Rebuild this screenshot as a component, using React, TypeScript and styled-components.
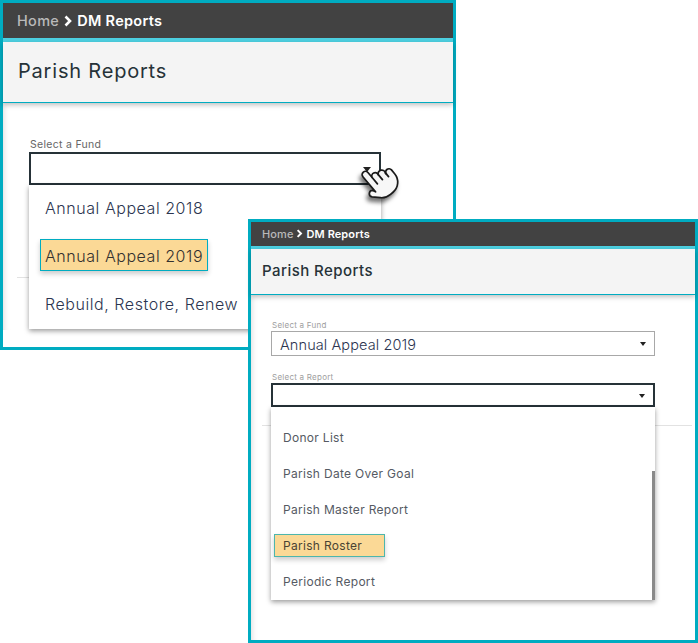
import React from "react";
import styled, { createGlobalStyle } from "styled-components";

const GlobalStyle = createGlobalStyle`
  html, body {
    margin: 0;
    background: #fff;
    font-family: Inter, "Open Sans", "Liberation Sans", sans-serif;
  }
`;

const Stage = styled.div`
  position: relative;
  width: 698px;
  height: 643px;
  overflow: hidden;
  background: #fff;
`;

const Window = styled.section<{ $small?: boolean }>`
  position: absolute;
  z-index: ${(p) => (p.$small ? 4 : 1)};
  box-sizing: border-box;
  left: ${(p) => (p.$small ? "248px" : "0")};
  top: ${(p) => (p.$small ? "219px" : "0")};
  width: ${(p) => (p.$small ? "450px" : "456px")};
  height: ${(p) => (p.$small ? "424px" : "350px")};
  border: 3px solid #00acc1;
  background: #fff;
  display: flex;
  flex-direction: column;
`;

const Breadcrumb = styled.div<{ $small?: boolean }>`
  flex: none;
  box-sizing: border-box;
  height: ${(p) => (p.$small ? "27px" : "39px")};
  padding: 0 0 ${(p) => (p.$small ? "1px" : "0")} ${(p) => (p.$small ? "11px" : "14px")};
  display: flex;
  align-items: center;
  gap: ${(p) => (p.$small ? "2px" : "3px")};
  background: #424242;
  border-bottom: ${(p) => (p.$small ? "3px" : "4px")} solid #4dd0e1;
  font-size: ${(p) => (p.$small ? "11px" : "14.5px")};
  letter-spacing: ${(p) => (p.$small ? "0.1px" : "0.3px")};
  font-weight: 600;
  color: #fff;
`;

const Crumb = styled.span`
  font-weight: 500;
  color: #b9b9b9;
`;

const TitleBar = styled.header<{ $small?: boolean }>`
  flex: none;
  box-sizing: border-box;
  height: ${(p) => (p.$small ? "46px" : "61px")};
  padding: 0 0 2px ${(p) => (p.$small ? "11px" : "15px")};
  display: flex;
  align-items: center;
  background: #f4f4f4;
  border-bottom: 1px solid #00acc1;
  box-shadow: 0 2px 5px rgba(0, 0, 0, 0.25);
  position: relative;
  font-size: ${(p) => (p.$small ? "15px" : "20px")};
  letter-spacing: ${(p) => (p.$small ? "0.45px" : "0.8px")};
  font-weight: ${(p) => (p.$small ? 500 : 400)};
  color: #263238;
`;

const Body = styled.div<{ $small?: boolean }>`
  box-sizing: border-box;
  flex: ${(p) => (p.$small ? "1" : "0 0 227px")};
  padding: ${(p) => (p.$small ? "25px 40px 0 20px" : "35px 72px 0 26px")};
  box-shadow: inset 7px 0 7px -7px rgba(0, 0, 0, 0.18);
`;

const FieldLabel = styled.div<{ $small?: boolean }>`
  height: ${(p) => (p.$small ? "11px" : "14px")};
  line-height: ${(p) => (p.$small ? "11px" : "14px")};
  padding-left: 1px;
  font-size: ${(p) => (p.$small ? "8px" : "10.5px")};
  letter-spacing: ${(p) => (p.$small ? "0.25px" : "0.3px")};
  color: ${(p) => (p.$small ? "#9e9e9e" : "#666")};
`;

const Field = styled.div<{ $small?: boolean }>`
  position: relative;
  margin-bottom: ${(p) => (p.$small ? "16px" : "0")};
`;

const Select = styled.div<{ $active?: boolean; $small?: boolean }>`
  box-sizing: border-box;
  height: ${(p) => (p.$active ? (p.$small ? "24px" : "33px") : "25px")};
  padding: 1px 8px 0 8px;
  display: flex;
  align-items: center;
  justify-content: space-between;
  background: #fff;
  border: ${(p) => (p.$active ? "2px solid #263238" : "1px solid #a8a8a8")};
  font-size: 14.5px;
  font-weight: 300;
  letter-spacing: 0.1px;
  color: #2c3550;
`;

const Caret = styled.i<{ $large?: boolean }>`
  margin-left: auto;
  width: 0;
  height: 0;
  border-left: ${(p) => (p.$large ? "4.5px" : "3.5px")} solid transparent;
  border-right: ${(p) => (p.$large ? "4.5px" : "3.5px")} solid transparent;
  border-top: ${(p) => (p.$large ? "5px" : "4px")} solid #212121;
`;

const Divider = styled.hr<{ $small?: boolean }>`
  border: 0;
  height: 1px;
  background: #e2e2e2;
  margin: ${(p) => (p.$small ? "18px -37px 0 -9px" : "92px -72px 0 -12px")};
`;

const Menu = styled.div<{ $small?: boolean }>`
  position: absolute;
  z-index: 2;
  top: 100%;
  left: 0;
  right: 0;
  box-sizing: border-box;
  height: ${(p) => (p.$small ? "193px" : "144px")};
  padding-top: ${(p) => (p.$small ? "12px" : "0")};
  background: #fff;
  box-shadow: 0 2px 5px rgba(0, 0, 0, 0.4);
`;

const OptionRow = styled.div<{ $small?: boolean }>`
  box-sizing: border-box;
  height: ${(p) => (p.$small ? "36px" : "48px")};
  padding: 0 0 ${(p) => (p.$small ? "0" : "2px")} ${(p) => (p.$small ? "12px" : "16px")};
  display: flex;
  align-items: center;
  font-size: ${(p) => (p.$small ? "12px" : "16px")};
  font-weight: ${(p) => (p.$small ? 400 : 300)};
  letter-spacing: ${(p) => (p.$small ? "0.3px" : "0.55px")};
  color: ${(p) => (p.$small ? "#555a63" : "#2c3550")};
`;

const Highlight = styled.span<{ $small?: boolean }>`
  box-sizing: border-box;
  width: ${(p) => (p.$small ? "111px" : "168px")};
  height: ${(p) => (p.$small ? "23px" : "32px")};
  margin: ${(p) => (p.$small ? "0 0 0 -9px" : "0 0 2px -5px")};
  padding: ${(p) => (p.$small ? "0 0 0 8px" : "2px 0 0 4px")};
  display: flex;
  align-items: center;
  white-space: nowrap;
  background: #fbd996;
  border: 1px solid ${(p) => (p.$small ? "#4db6ac" : "#00acc1")};
  box-shadow: 0 3px 5px rgba(0, 0, 0, 0.2);
  color: ${(p) => (p.$small ? "#4a4334" : "#33302f")};
`;

const Scrollbar = styled.div`
  position: absolute;
  right: 0;
  bottom: 0;
  width: 3px;
  height: 129px;
  background: #8a8a8a;
`;

const HandCursor = styled.svg`
  position: absolute;
  z-index: 3;
  left: 358px;
  top: 160px;
  filter: drop-shadow(-2px 4px 2px rgba(0, 0, 0, 0.55));
`;

function Chevron({ size }: { size: number }) {
  return (
    <svg width={size} height={size} viewBox="0 0 12 12" fill="none" stroke="#fff" strokeWidth="2.6">
      <path d="M3.5 1.5 8 6l-4.5 4.5" />
    </svg>
  );
}

function Hand() {
  const outline =
    "M18 11a2 2 0 1 1 4 0v3a8 8 0 0 1-8 8h-2c-2.8 0-4.5-.86-5.99-2.34l-3.6-3.6a2 2 0 0 1 2.83-2.82L6 15V3a2 2 0 0 1 4 0v4a2 2 0 0 1 4 1a2 2 0 0 1 4 2z";
  return (
    <HandCursor width="46" height="46" viewBox="0 0 28 28" fill="none" stroke="#1a1a1a" strokeWidth="1.05" strokeLinecap="round" strokeLinejoin="round">
      <g transform="rotate(-40 14 14) translate(2 1)">
        <path d={outline} fill="#f7f7f7" />
        <path d="M10 7v5M14 8v4M18 10v3" />
      </g>
    </HandCursor>
  );
}

const funds = ["Annual Appeal 2018", "Annual Appeal 2019", "Rebuild, Restore, Renew"];
const reports = ["Donor List", "Parish Date Over Goal", "Parish Master Report", "Parish Roster", "Periodic Report"];

export default function App() {
  return (
    <Stage>
      <GlobalStyle />
      <Window>
        <Breadcrumb>
          <Crumb>Home</Crumb>
          <Chevron size={12} />
          DM Reports
        </Breadcrumb>
        <TitleBar>Parish Reports</TitleBar>
        <Body>
          <FieldLabel>Select a Fund</FieldLabel>
          <Field>
            <Select $active>
              <Caret $large />
            </Select>
            <Menu>
              {funds.map((f) => (
                <OptionRow key={f}>
                  {f === "Annual Appeal 2019" ? <Highlight>{f}</Highlight> : f}
                </OptionRow>
              ))}
            </Menu>
          </Field>
          <Divider />
        </Body>
      </Window>
      <Hand />
      <Window $small>
        <Breadcrumb $small>
          <Crumb>Home</Crumb>
          <Chevron size={9} />
          DM Reports
        </Breadcrumb>
        <TitleBar $small>Parish Reports</TitleBar>
        <Body $small>
          <FieldLabel $small>Select a Fund</FieldLabel>
          <Field $small>
            <Select $small>
              Annual Appeal 2019
              <Caret />
            </Select>
          </Field>
          <FieldLabel $small>Select a Report</FieldLabel>
          <Field>
            <Select $small $active>
              <Caret />
            </Select>
            <Menu $small>
              {reports.map((r) => (
                <OptionRow $small key={r}>
                  {r === "Parish Roster" ? <Highlight $small>{r}</Highlight> : r}
                </OptionRow>
              ))}
              <Scrollbar />
            </Menu>
          </Field>
          <Divider $small />
        </Body>
      </Window>
    </Stage>
  );
}
